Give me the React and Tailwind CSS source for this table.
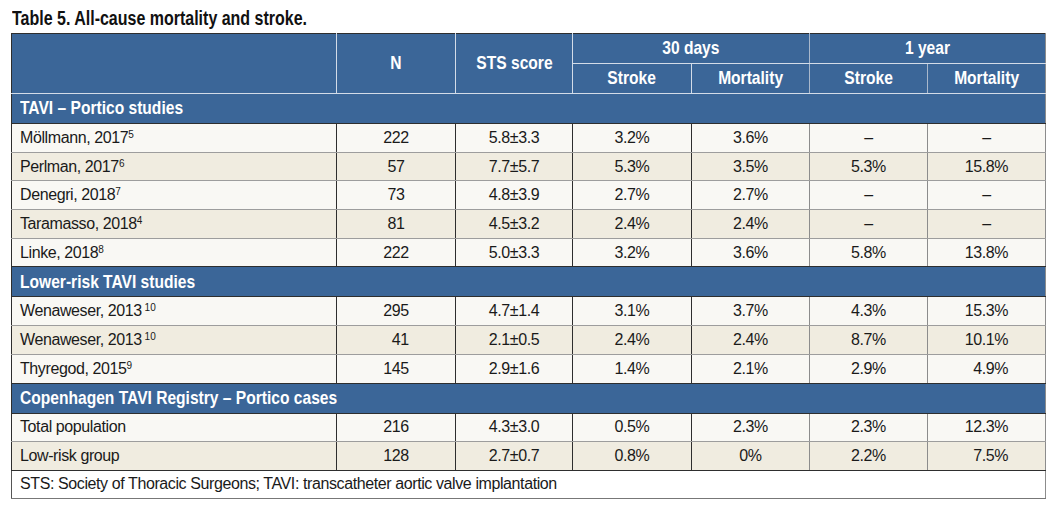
import React from "react";

const bold = "font-[family-name:'Liberation_Sans',Arial,sans-serif] font-bold";
const body = "font-[family-name:'Liberation_Sans',Arial,sans-serif]";

// condensed bold text: Arial bold squeezed to the width of a condensed face
function Cond({ children, left }) {
  return (
    <span className={`inline-block whitespace-nowrap scale-x-[0.82] ${left ? "origin-left" : "origin-center"}`}>
      {children}
    </span>
  );
}

const groups = [
  {
    title: "TAVI – Portico studies",
    rows: [
      ["Möllmann, 2017", "5", "222", "5.8±3.3", "3.2%", "3.6%", "–", "–"],
      ["Perlman, 2017", "6", "57", "7.7±5.7", "5.3%", "3.5%", "5.3%", "15.8%"],
      ["Denegri, 2018", "7", "73", "4.8±3.9", "2.7%", "2.7%", "–", "–"],
      ["Taramasso, 2018", "4", "81", "4.5±3.2", "2.4%", "2.4%", "–", "–"],
      ["Linke, 2018", "8", "222", "5.0±3.3", "3.2%", "3.6%", "5.8%", "13.8%"],
    ],
  },
  {
    title: "Lower-risk TAVI studies",
    rows: [
      ["Wenaweser, 2013", " 10", "295", "4.7±1.4", "3.1%", "3.7%", "4.3%", "15.3%"],
      ["Wenaweser, 2013", " 10", "\u200741", "2.1±0.5", "2.4%", "2.4%", "8.7%", "10.1%"],
      ["Thyregod, 2015", "9", "145", "2.9±1.6", "1.4%", "2.1%", "2.9%", "\u20074.9%"],
    ],
  },
  {
    title: "Copenhagen TAVI Registry – Portico cases",
    rows: [
      ["Total population", "", "216", "4.3±3.0", "0.5%", "2.3%", "2.3%", "12.3%"],
      ["Low-risk group", "", "128", "2.7±0.7", "0.8%", "0%", "2.2%", "\u20077.5%"],
    ],
  },
];

// right-hand border colour per column
const rightBorder = [
  "border-r-[#2e2e2e]",
  "border-r-[#2e2e2e]",
  "border-r-[#2e2e2e]",
  "border-r-[#2e2e2e]",
  "border-r-[#8c8c8c]",
  "border-r-[#8c8c8c]",
  "border-r-[#8c8c8c]",
];

export default function App() {
  return (
    <div className="w-[1059px] h-[513px] bg-white pl-[11px] pt-[4px]">
      <h1 className={`${bold} text-[19.5px] leading-[29px] text-[#111] pl-[1px]`}>
        <Cond left>Table 5. All-cause mortality and stroke.</Cond>
      </h1>
      <table className="table-fixed border-collapse w-[1034px]">
        <colgroup>
          <col className="w-[325px]" />
          <col className="w-[119px]" />
          <col className="w-[117px]" />
          <col className="w-[119px]" />
          <col className="w-[118px]" />
          <col className="w-[118px]" />
          <col className="w-[118px]" />
        </colgroup>
        <thead className={`${bold} text-[19px] text-white bg-[#3b6698]`}>
          <tr className="h-[30px]">
            <th rowSpan={2} className="border-t border-t-[#2e2e2e] border-l border-l-[#2e2e2e] border-r border-r-[#d3dce8] border-b border-b-[#d3dce8]"></th>
            <th rowSpan={2} className="border-t border-t-[#2e2e2e] border-r border-r-[#d3dce8] border-b border-b-[#d3dce8]"><Cond>N</Cond></th>
            <th rowSpan={2} className="border-t border-t-[#2e2e2e] border-r border-r-[#d3dce8] border-b border-b-[#d3dce8]"><Cond>STS score</Cond></th>
            <th colSpan={2} className="border-t border-t-[#2e2e2e] border-r border-r-[#a9b8cc] border-b border-b-[#d3dce8]"><Cond>30 days</Cond></th>
            <th colSpan={2} className="border-t border-t-[#2e2e2e] border-r border-r-[#8c8c8c] border-b border-b-[#d3dce8]"><Cond>1 year</Cond></th>
          </tr>
          <tr className="h-[30px]">
            <th className="border-r border-r-[#d3dce8] border-b border-b-[#d3dce8]"><Cond>Stroke</Cond></th>
            <th className="border-r border-r-[#a9b8cc] border-b border-b-[#d3dce8]"><Cond>Mortality</Cond></th>
            <th className="border-r border-r-[#a9b8cc] border-b border-b-[#d3dce8]"><Cond>Stroke</Cond></th>
            <th className="border-r border-r-[#8c8c8c] border-b border-b-[#d3dce8]"><Cond>Mortality</Cond></th>
          </tr>
        </thead>
        <tbody className={`${body} text-[16px] tracking-[-0.4px] text-[#1a1a1a]`}>
          {groups.map((g) => (
            <React.Fragment key={g.title}>
              <tr className="h-[30px] bg-[#3b6698]">
                <td
                  colSpan={7}
                  className={`${bold} text-[19px] tracking-normal text-white text-left pl-[8px] border-l border-l-[#2e2e2e] border-r border-r-[#8c8c8c] border-b border-b-[#2e2e2e]`}
                >
                  <Cond left>{g.title}</Cond>
                </td>
              </tr>
              {g.rows.map((r, i) => {
                const last = i === g.rows.length - 1;
                const bottom = last ? "border-b-[#2e2e2e]" : "border-b-[#9d9d9d]";
                const bg = i % 2 === 0 ? "bg-[#f9f8f4]" : "bg-[#f0ece0]";
                return (
                  <tr key={i} className={`h-[28.7px] ${bg}`}>
                    <td className={`pl-[8px] text-left whitespace-pre border-l border-l-[#2e2e2e] border-b ${bottom} border-r ${rightBorder[0]}`}>
                      {r[0]}
                      {r[1] && <sup className="text-[10px] tracking-normal">{r[1]}</sup>}
                    </td>
                    {r.slice(2).map((v, j) => (
                      <td key={j} className={`text-center whitespace-pre border-b ${bottom} border-r ${rightBorder[j + 1]}`}>
                        {v}
                      </td>
                    ))}
                  </tr>
                );
              })}
            </React.Fragment>
          ))}
          <tr className="h-[28px] bg-white">
            <td colSpan={7} className="pl-[8px] text-left border-l border-l-[#555] border-r border-r-[#8c8c8c] border-b border-b-[#777]">
              STS: Society of Thoracic Surgeons; TAVI: transcatheter aortic valve implantation
            </td>
          </tr>
        </tbody>
      </table>
    </div>
  );
}
